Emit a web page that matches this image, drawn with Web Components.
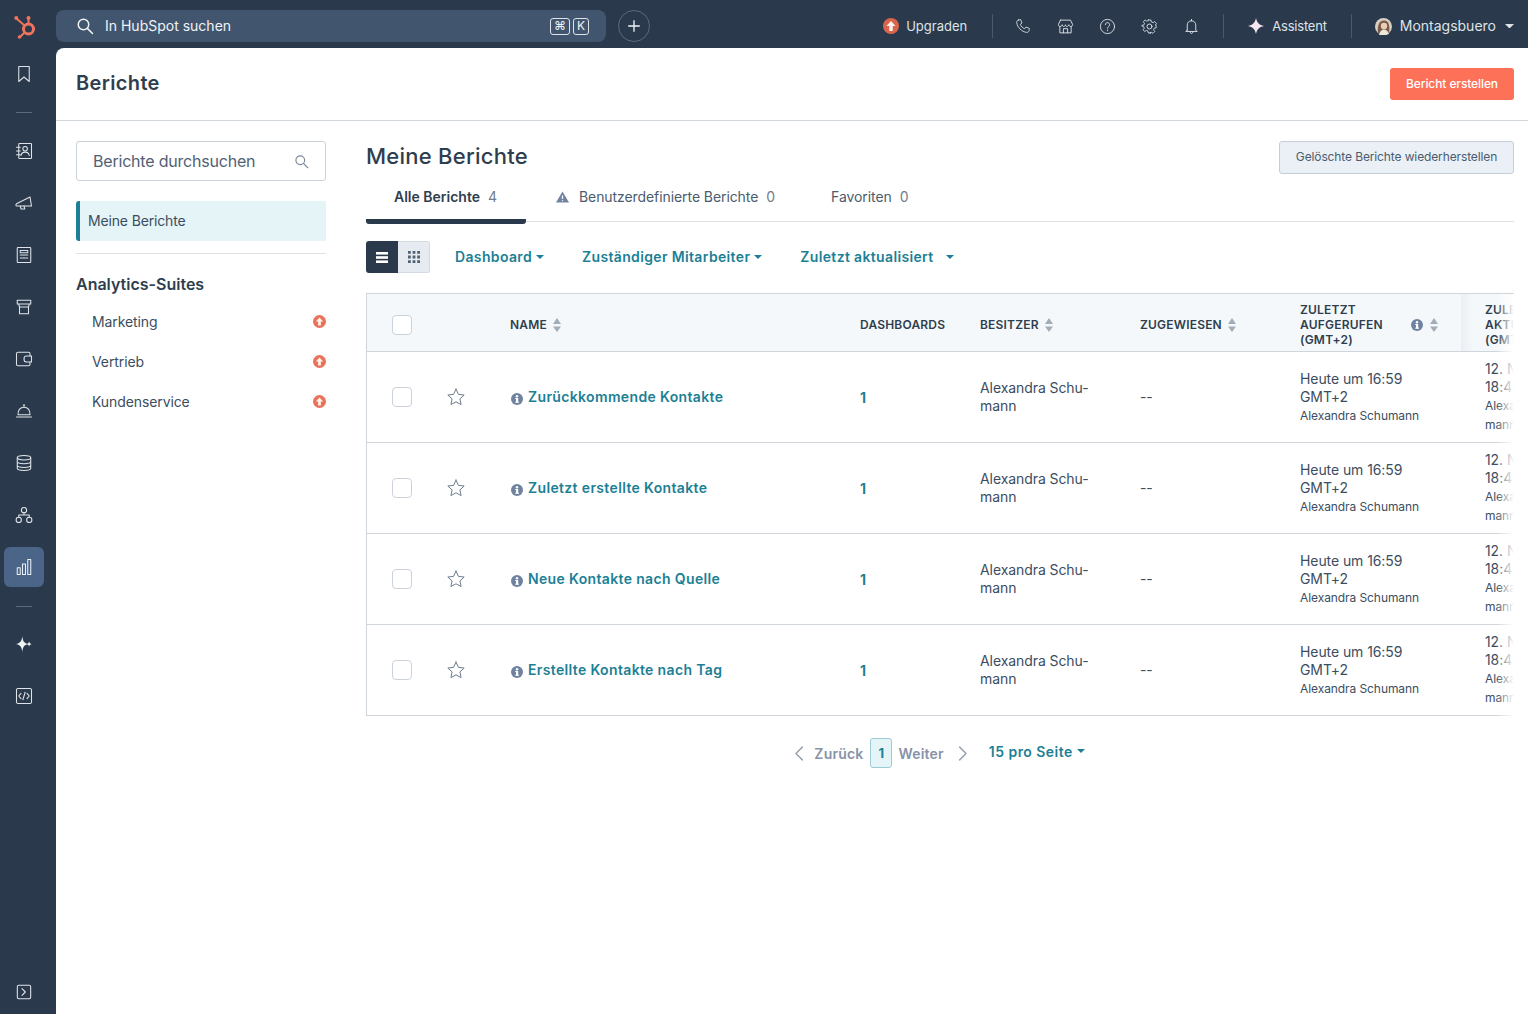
<!DOCTYPE html>
<html lang="de">
<head>
<meta charset="utf-8">
<title>Berichte</title>
<style>
  html, body { margin: 0; height: 100%; }
  body { font-family: Inter, "Liberation Sans", sans-serif; color: #33475b; background: #2a3a4c; overflow: hidden; }
</style>
</head>
<body>
<hs-app>
  <hs-topbar slot="top"></hs-topbar>
  <hs-rail slot="rail"></hs-rail>
  <hs-page-header slot="header" title="Berichte"></hs-page-header>
  <hs-sidebar slot="side"></hs-sidebar>
  <hs-reports slot="main">
    <hs-report-row>Zurückkommende Kontakte</hs-report-row>
    <hs-report-row>Zuletzt erstellte Kontakte</hs-report-row>
    <hs-report-row>Neue Kontakte nach Quelle</hs-report-row>
    <hs-report-row>Erstellte Kontakte nach Tag</hs-report-row>
  </hs-reports>
</hs-app>

<script>
// Icon paths, all on a 24x24 box
const ICONS = {
  search: '<circle cx="10" cy="10" r="7"/><path d="M15.500 15.500 22 22"/>',
  plus: '<path d="M12 4v16M4 12h16"/>',
  phone: '<path d="M5 3 8.500 2.500 10.500 7.500 8 9.500C9 12.500 11.500 15 14.500 16L16.500 13.500 21.500 15.500 21 19C20.500 21 19 22 17 21.500 10 20.500 3.500 14 2.500 7 2.500 5 3.500 3.500 5 3Z"/>',
  store: '<path d="M5 3h14l3 6c0 2-1 3-2.500 3S17 11 16.700 9.500C16.500 11 15 12 13.800 12S12 11 12 9.500C12 11 10.500 12 9.500 12S7.500 11 7.300 9.500C7 11 6 12 4.500 12S2 11 2 9L5 3Z"/><path d="M4 12v9h16v-9M9 21v-6h6v6"/>',
  help: '<circle cx="12" cy="12" r="10"/><path d="M9 9.500C9 7.500 10.500 6.500 12 6.500S15 7.700 15 9.500C15 12 12 12 12 14.500"/><path d="M12 17v1"/>',
  gear: '<circle cx="12" cy="12" r="3.500"/><path d="M10 2h4l.6 3 2.500 1.100 2.600-1.700 2.800 2.800-1.700 2.600L21.900 10l.1 4-3 .6-1 2.400 1.700 2.600-2.800 2.800-2.600-1.700-2.200 1L14 22h-4l-.6-3-2.500-1-2.600 1.700L2 17l1.700-2.600L2.700 12 0 11.300v-1l3-.6 1-2.500L2.300 4.600 5 2l2.600 1.700L9.500 3 10 2Z" transform="translate(1.200 1) scale(.92)"/>',
  bell: '<path d="M12 2v2M6 17V10c0-3.500 2.500-6 6-6s6 2.500 6 6v7l2 2H4l2-2ZM10 19c0 2 1 3 2 3s2-1 2-3"/>',
  bookmark: '<path d="M5 2h14v20l-7-6-7 6V2Z"/>',
  contacts: '<rect x="5" y="2" width="17" height="20" rx="1"/><circle cx="13.500" cy="9" r="3"/><path d="M8 18c.5-3.500 3-4.500 5.500-4.500S18.500 14.500 19 18M2 7h5M2 12h5M2 17h5"/>',
  megaphone: '<path d="M2 13 20 4l2 12-20 0-1-1 1-2Z"/><path d="M7 16l1 4h5l-1-4"/>',
  content: '<rect x="3" y="2" width="18" height="20" rx="1"/><path d="M7 12h10M7 16h10M7 9V6h10v3H7Z"/>',
  commerce: '<path d="M3 3h18v5H3zM5 8l1 4h12l1-4M6 12v9h12v-9M3 8h18"/>',
  wallet: '<path d="M20 8V5c0-1-1-2-2-2H4C3 3 2 4 2 5v14c0 1 1 2 2 2h14c1 0 2-1 2-2v-3"/><path d="M15 8h7v8h-7c-2 0-3-2-3-4s1-4 3-4Z"/>',
  service: '<path d="M4 17c0-6 3-10 8-10s8 4 8 10M2 20h20M11 4h2M12 4v3M4 17h16"/>',
  database: '<ellipse cx="12" cy="5" rx="9" ry="3"/><path d="M3 5v14c0 1.700 4 3 9 3s9-1.300 9-3V5M3 10c0 1.700 4 3 9 3s9-1.300 9-3M3 15c0 1.700 4 3 9 3s9-1.300 9-3"/>',
  nodes: '<circle cx="12" cy="5.500" r="3.500"/><circle cx="5" cy="18.500" r="3.500"/><circle cx="19" cy="18.500" r="3.500"/><path d="M12 9v3M5 15v-3h14v3"/>',
  bars: '<rect x="3" y="13" width="4" height="9"/><rect x="10" y="8" width="4" height="14"/><rect x="17" y="2" width="4" height="20"/>',
  code: '<rect x="2" y="2" width="20" height="20" rx="2"/><path d="M8 8.500 5 12l3 3.500M16 8.500l3 3.500-3 3.500M13.500 7l-3 10"/>',
  expand: '<rect x="2" y="2" width="20" height="20" rx="2"/><path d="M9 7l5 5-5 5"/>',
  star: '<path d="M12 2.500l2.900 6.300 6.900.8-5.100 4.700 1.400 6.800-6.100-3.400-6.100 3.400 1.400-6.800-5.100-4.700 6.900-.8L12 2.500Z"/>',
  chevleft: '<path d="M16 3 7 12l9 9"/>',
  chevright: '<path d="M8 3l9 9-9 9"/>'
};

class HsIcon extends HTMLElement {
  connectedCallback() {
    const size = this.getAttribute('size') || 16;
    const sw = this.getAttribute('stroke') || 1.6;
    this.attachShadow({ mode: 'open' }).innerHTML = `
      <style>:host { display: inline-flex; flex: none; } svg { display: block; }</style>
      <svg width="${size}" height="${size}" viewBox="0 0 24 24" fill="none" stroke="currentColor"
        stroke-width="${sw}" stroke-linejoin="round" stroke-linecap="round">${ICONS[this.getAttribute('name')] || ''}</svg>`;
  }
}
customElements.define('hs-icon', HsIcon);

// Small round coral badge with the up arrow
class HsUpgradeDot extends HTMLElement {
  connectedCallback() {
    const size = this.getAttribute('size') || 14;
    const fill = this.getAttribute('fill') || '#e8735a';
    this.attachShadow({ mode: 'open' }).innerHTML = `
      <style>:host { display: inline-flex; flex: none; } svg { display: block; }</style>
      <svg width="${size}" height="${size}" viewBox="0 0 16 16">
        <circle cx="8" cy="8" r="8" fill="${fill}"/>
        <path d="M8 3 12.500 8H9.700v5H6.300V8H3.500L8 3Z" fill="#fff2ec"/>
      </svg>`;
  }
}
customElements.define('hs-upgrade-dot', HsUpgradeDot);

class HsInfoDot extends HTMLElement {
  connectedCallback() {
    this.attachShadow({ mode: 'open' }).innerHTML = `
      <style>:host { display: inline-flex; flex: none; } svg { display: block; }</style>
      <svg width="12" height="12" viewBox="0 0 12 12">
        <circle cx="6" cy="6" r="6" fill="#6f83a0"/>
        <rect x="5" y="5" width="2.200" height="4.500" fill="#fff"/>
        <rect x="4.200" y="5" width="2" height="1" fill="#fff"/>
        <rect x="4.200" y="8.700" width="3.800" height="1" fill="#fff"/>
        <circle cx="6" cy="3.200" r="1.200" fill="#fff"/>
      </svg>`;
  }
}
customElements.define('hs-info-dot', HsInfoDot);

class HsSortArrows extends HTMLElement {
  connectedCallback() {
    this.attachShadow({ mode: 'open' }).innerHTML = `
      <style>:host { display: inline-flex; flex: none; } svg { display: block; }</style>
      <svg width="8" height="14" viewBox="0 0 8 14" fill="#a3adb8">
        <path d="M4 0 8 6H0ZM0 8.500h8L4 14Z"/>
      </svg>`;
  }
}
customElements.define('hs-sort-arrows', HsSortArrows);

class HsCaret extends HTMLElement {
  connectedCallback() {
    const size = this.getAttribute('size') || 8;
    this.attachShadow({ mode: 'open' }).innerHTML = `
      <style>:host { display: inline-flex; flex: none; } svg { display: block; }</style>
      <svg width="${size}" height="${size / 2}" viewBox="0 0 8 4" fill="currentColor"><path d="M0 0h8L4 4Z"/></svg>`;
  }
}
customElements.define('hs-caret', HsCaret);

class HsApp extends HTMLElement {
  constructor() {
    super();
    this.attachShadow({ mode: 'open' }).innerHTML = `
      <style>
        :host { display: grid; grid-template: 48px 1fr / 56px 1fr; height: 1014px; width: 1528px; background: #2a3a4c; }
        .top { grid-column: 1 / 3; }
        .main { background: #fff; border-top-left-radius: 8px; display: flex; flex-direction: column; min-width: 0; overflow: hidden; }
        .body { display: flex; flex: 1; }
      </style>
      <div class="top"><slot name="top"></slot></div>
      <slot name="rail"></slot>
      <div class="main">
        <slot name="header"></slot>
        <div class="body"><slot name="side"></slot><slot name="main"></slot></div>
      </div>`;
  }
}
customElements.define('hs-app', HsApp);

class HsTopbar extends HTMLElement {
  constructor() {
    super();
    this.attachShadow({ mode: 'open' }).innerHTML = `
      <style>
        :host { display: flex; align-items: center; height: 48px; box-sizing: border-box; padding-top: 4px; background: #2a3a4c; color: #dfe3e8; font-size: 13px; }
        .logo { width: 56px; display: flex; justify-content: center; flex: none; margin-left: -2px; margin-right: 2px; }
        .search { width: 550px; height: 32px; box-sizing: border-box; background: #41566e; border-radius: 8px; display: flex; align-items: center; padding: 0 17px 0 20px; color: #f0f3f6; font-size: 14px; }
        .search span.ph { margin-left: 11px; padding-bottom: 2px; flex: 1; }
        .kbd { display: inline-flex; align-items: center; justify-content: center; height: 17px; box-sizing: border-box; width: 16px; border: 1px solid #dfe3e8; border-radius: 3px; font-size: 12px; margin-left: 3px; line-height: 1; }
        .kbd.cmd { width: 20px; }
        .add { width: 32px; height: 32px; box-sizing: border-box; margin-left: 12px; border: 1px solid #5b6b7c; border-radius: 50%; display: flex; align-items: center; justify-content: center; color: #f0f3f6; }
        .right { margin-left: auto; display: flex; align-items: center; padding-right: 14px; }
        .sep { width: 1px; height: 24px; background: #4b5b6c; }
        .ic { width: 42px; display: flex; justify-content: center; }
        .upgrade { display: flex; align-items: center; gap: 7px; margin-right: 25px; }
        .assist { display: flex; align-items: center; gap: 8px; margin: 0 24px 0 24px; letter-spacing: -.2px; }
        .acct { display: flex; align-items: center; margin-left: 23px; font-size: 14px; }
        .acct span { margin: 0 9px 0 8px; padding-bottom: 1px; }
      </style>
      <div class="logo">
        <svg width="26" height="28" viewBox="0 0 26 28" fill="none" stroke="#f0745c" stroke-linecap="round">
          <circle cx="15.500" cy="17" r="5" stroke-width="3"/>
          <path d="M15.500 12V7M11.500 13.500 3.500 6.500M11.500 20.500 7 25" stroke-width="2"/>
          <circle cx="3.300" cy="6" r="2" fill="#f0745c" stroke="none"/>
          <circle cx="15.500" cy="6" r="2" fill="#f0745c" stroke="none"/>
          <circle cx="6.500" cy="25" r="1.800" fill="#f0745c" stroke="none"/>
        </svg>
      </div>
      <div class="search">
        <hs-icon name="search" size="18" stroke="2"></hs-icon>
        <span class="ph">In HubSpot suchen</span>
        <span class="kbd cmd">⌘</span><span class="kbd">K</span>
      </div>
      <div class="add"><hs-icon name="plus" size="16" stroke="2"></hs-icon></div>
      <div class="right">
        <div class="upgrade"><hs-upgrade-dot size="16" fill="#d9654c"></hs-upgrade-dot>Upgraden</div>
        <div class="sep"></div>
        <div style="width:9px"></div>
        <div class="ic"><hs-icon name="phone" size="16" stroke="1.300"></hs-icon></div>
        <div class="ic"><hs-icon name="store" size="17" stroke="1.300"></hs-icon></div>
        <div class="ic"><hs-icon name="help" size="17" stroke="1.300"></hs-icon></div>
        <div class="ic"><hs-icon name="gear" size="17" stroke="1.300"></hs-icon></div>
        <div class="ic"><hs-icon name="bell" size="17" stroke="1.300"></hs-icon></div>
        <div style="width:11px"></div>
        <div class="sep"></div>
        <div class="assist">
          <svg width="16" height="16" viewBox="0 0 16 16"><path d="M8 0C8.900 4.500 11 7 16 8 11 9 8.900 11.500 8 16 7.100 11.500 5 9 0 8 5 7 7.100 4.500 8 0Z" fill="#f6e6f0"/></svg>
          Assistent
        </div>
        <div class="sep"></div>
        <div class="acct">
          <svg width="17" height="17" viewBox="0 0 17 17">
            <circle cx="8.500" cy="8.500" r="8.500" fill="#d8cfc4"/>
            <path d="M3 15C2 8 4 2.500 9 2.500S15 8 14 15L10.500 17h-4Z" fill="#7b5a48"/>
            <circle cx="9" cy="8" r="3.200" fill="#e9cdb6"/>
            <path d="M4 17c1-4 3-5.500 5-5.500s4 1.500 5 4.500l-3 1Z" fill="#efe7dc"/>
          </svg>
          <span>Montagsbuero</span>
          <hs-caret size="9"></hs-caret>
        </div>
      </div>`;
  }
}
customElements.define('hs-topbar', HsTopbar);

class HsRail extends HTMLElement {
  constructor() {
    super();
    const item = (name, cls = '') => `<div class="it ${cls}"><hs-icon name="${name}" size="18" stroke="1.400"></hs-icon></div>`;
    this.attachShadow({ mode: 'open' }).innerHTML = `
      <style>
        :host { display: flex; flex-direction: column; align-items: center; padding: 6px 8px 0 0; box-sizing: border-box; color: #dfe3e8; background: #2a3a4c; height: 966px; }
        .it { width: 40px; height: 40px; flex: none; margin-bottom: 12px; border-radius: 6px; display: flex; align-items: center; justify-content: center; }
        .it.on { background: #4a6588; color: #e8eef5; margin-bottom: 0; }
        .rule { width: 16px; height: 1px; background: #5b6b7c; flex: none; }
        .r1 { margin: 6px 0 18px; }
        .r2 { margin: 19px 0 17px; }
        .end { margin-top: auto; margin-bottom: 2px; }
      </style>
      ${item('bookmark')}
      <div class="rule r1"></div>
      ${item('contacts')}${item('megaphone')}${item('content')}${item('commerce')}${item('wallet')}
      ${item('service')}${item('database')}${item('nodes')}${item('bars', 'on')}
      <div class="rule r2"></div>
      <div class="it"><svg width="18" height="18" viewBox="0 0 16 16" fill="#f0f3f6"><path d="M6.500 1C7 5 7.500 7 12 8 7.500 9 7 11 6.500 15 6 11 5 9 1 8 5 7 6 5 6.500 1ZM12.500 5.500C12.700 7 13.200 7.600 15 8 13.200 8.400 12.700 9 12.500 10.500 12.300 9 11.800 8.400 10.500 8 11.800 7.600 12.300 7 12.500 5.500Z"/></svg></div>
      ${item('code')}
      <div class="it end"><hs-icon name="expand" size="16" stroke="1.600"></hs-icon></div>`;
  }
}
customElements.define('hs-rail', HsRail);

class HsPageHeader extends HTMLElement {
  connectedCallback() {
    this.attachShadow({ mode: 'open' }).innerHTML = `
      <style>
        :host { display: flex; align-items: center; justify-content: space-between; height: 73px; box-sizing: border-box; padding: 0 14px 0 20px; border-bottom: 1px solid #cfd5db; }
        h1 { margin: 0 0 2px; font-size: 20px; font-weight: 600; color: #2f3e4e; letter-spacing: .35px; }
        button { height: 32px; width: 124px; border: 0; border-radius: 3px; background: #fd7158; color: #fff; font: 500 12px Inter, "Liberation Sans", sans-serif; padding: 0 0 2px; letter-spacing: -.1px; }
      </style>
      <h1>${this.getAttribute('title')}</h1>
      <button>Bericht erstellen</button>`;
  }
}
customElements.define('hs-page-header', HsPageHeader);

class HsSidebar extends HTMLElement {
  constructor() {
    super();
    const suite = n => `<div class="suite"><span>${n}</span><hs-upgrade-dot size="13"></hs-upgrade-dot></div>`;
    this.attachShadow({ mode: 'open' }).innerHTML = `
      <style>
        :host { display: block; width: 250px; margin-left: 20px; padding-top: 20px; flex: none; font-size: 14px; }
        .box { height: 40px; box-sizing: border-box; border: 1px solid #cbd2d9; border-radius: 3px; display: flex; align-items: center; justify-content: space-between; padding: 0 16px; font-size: 16px; color: #516174; letter-spacing: -.2px; }
        .box hs-icon { color: #7c8a99; }
        .active { margin-top: 20px; height: 40px; box-sizing: border-box; background: #e5f4f7; border-left: 4px solid #1d7f95; border-radius: 3px 0 0 3px; display: flex; align-items: center; padding: 0 0 2px 8px; color: #3c4d5f; letter-spacing: -.15px; }
        hr { border: 0; border-top: 1px solid #dfe3e8; margin: 12px 0 0; }
        h3 { margin: 20px 0 7px; font-size: 16px; line-height: 20px; font-weight: 600; color: #2f3e4e; }
        .suite { height: 40px; display: flex; align-items: center; justify-content: space-between; padding-left: 16px; color: #3c4d5f; letter-spacing: -.1px; }
        .suite hs-upgrade-dot { margin-top: 1px; }
      </style>
      <div class="box"><span>Berichte durchsuchen</span><hs-icon name="search" size="15" stroke="1.800"></hs-icon></div>
      <div class="active">Meine Berichte</div>
      <hr>
      <h3>Analytics-Suites</h3>
      ${suite('Marketing')}${suite('Vertrieb')}${suite('Kundenservice')}`;
  }
}
customElements.define('hs-sidebar', HsSidebar);

const COLS = '143px 350px 120px 160px 160px 161px 1fr';

class HsReportRow extends HTMLElement {
  constructor() {
    super();
    this.attachShadow({ mode: 'open' }).innerHTML = `
      <style>
        :host { display: grid; grid-template-columns: ${COLS}; height: 91px; box-sizing: border-box; border-bottom: 1px solid #cfd5db; align-items: center; font-size: 14px; line-height: 18px; color: #3c4d5f; letter-spacing: -.08px; }
        .sel { display: flex; align-items: center; padding-left: 25px; }
        .check { width: 20px; height: 20px; box-sizing: border-box; border: 1px solid #cbd2d9; border-radius: 4px; background: #fff; }
        .star { margin-left: 34px; color: #6f7d8c; }
        .name { display: flex; align-items: center; gap: 5px; font-weight: 600; color: #1d7f95; letter-spacing: .35px; }
        .name hs-info-dot { margin: 3px 0 0 1px; }
        .dash { font-weight: 700; color: #1d7f95; padding-top: 1px; }
        .small { font-size: 12px; }
        .last { padding-left: 24px; white-space: nowrap; overflow: hidden; }
      </style>
      <div class="sel"><div class="check"></div><hs-icon class="star" name="star" size="20" stroke="1.200"></hs-icon></div>
      <div class="name"><hs-info-dot></hs-info-dot><span><slot></slot></span></div>
      <div class="dash">1</div>
      <div>Alexandra Schu-<br>mann</div>
      <div>--</div>
      <div>Heute um 16:59<br>GMT+2<br><span class="small">Alexandra Schumann</span></div>
      <div class="last">12. Nov.<br>18:42<br><span class="small">Alexandra Schu-<br>mann</span></div>`;
  }
}
customElements.define('hs-report-row', HsReportRow);

class HsReports extends HTMLElement {
  constructor() {
    super();
    this.attachShadow({ mode: 'open' }).innerHTML = `
      <style>
        :host { display: block; width: 1148px; margin-left: 40px; padding-top: 19px; color: #33475b; font-size: 14px; }
        .head { display: flex; align-items: center; justify-content: space-between; height: 34px; }
        h2 { margin: 0 0 2px; font-size: 22px; font-weight: 500; color: #2f3e4e; letter-spacing: .25px; }
        .restore { width: 235px; height: 33px; box-sizing: border-box; border: 1px solid #c5ced8; border-radius: 3px; background: #eaf0f6; color: #4b5c6e; font: 400 12px Inter, "Liberation Sans", sans-serif; padding: 0 0 2px; letter-spacing: -.12px; }
        .tabs { display: flex; height: 48px; border-bottom: 1px solid #dfe3e8; box-sizing: border-box; }
        .tab { display: flex; align-items: center; padding-bottom: 2px; height: 47px; color: #4b5c6e; box-sizing: border-box; letter-spacing: -.08px; }
        .tab.on { width: 160px; padding-left: 28px; height: 50px; padding-bottom: 1px; border-bottom: 5px solid #2a3a4c; border-radius: 0 0 3px 3px; font-weight: 600; color: #2f3e4e; letter-spacing: 0; }
        .tab b { font-weight: 400; margin-left: 8px; color: #6f7d8c; }
        .tab svg { margin: 0 10px 0 30px; }
        .tab.fav { margin-left: 56px; }
        .bar { display: flex; align-items: center; height: 32px; margin-top: 19px; color: #1d7f95; font-weight: 600; letter-spacing: .35px; }
        .toggle { display: flex; width: 64px; height: 32px; border-radius: 3px; overflow: hidden; margin-right: 25px; }
        .toggle div { width: 32px; display: flex; align-items: center; justify-content: center; }
        .toggle .a { background: #2a3a4c; }
        .toggle .b { background: #e6ebf1; border: 1px solid #d4dbe2; border-left: 0; box-sizing: border-box; }
        .filter { display: flex; align-items: center; gap: 4px; margin-right: 38px; padding-bottom: 2px; }
        .filter hs-caret { margin-top: 1px; }
        .table { position: relative; margin-top: 20px; overflow: hidden; border-top: 1px solid #cfd5db; border-left: 1px solid #cfd5db; }
        .thead { display: grid; grid-template-columns: ${COLS}; height: 58px; box-sizing: border-box; padding-top: 4px; background: #f5f8fa; border-bottom: 1px solid #cfd5db; align-items: center; font-size: 12px; line-height: 15px; font-weight: 600; color: #2f3e4e; letter-spacing: .2px; }
        .th { display: flex; align-items: center; gap: 6px; }
        .chk { width: 20px; height: 20px; margin-left: 25px; box-sizing: border-box; border: 1px solid #cbd2d9; border-radius: 4px; background: #fff; }
        .th.wide { justify-content: space-between; padding-right: 23px; }
        .th .mini { display: flex; align-items: center; gap: 7px; }
        .th.last { background: linear-gradient(90deg, #e9eff4, #f5f8fa 12px); align-self: stretch; margin-top: -4px; padding-top: 4px; padding-left: 24px; white-space: nowrap; }
        .fade { position: absolute; top: 0; right: 0; bottom: 0; width: 18px; background: linear-gradient(90deg, rgba(255,255,255,0), #fff 100%); }
        .pager { display: flex; align-items: center; justify-content: center; margin-top: 22px; font-weight: 600; color: #8793a8; position: relative; left: -2px; letter-spacing: .2px; }
        .pg { width: 22px; height: 30px; box-sizing: border-box; border: 1px solid #9ccbd6; background: #e5f4f7; color: #1d7f95; border-radius: 3px; display: flex; align-items: center; justify-content: center; font-size: 13px; font-weight: 700; margin: 0 6px 0 7px; }
        .pager hs-icon { color: #97a1ae; }
        .per { display: flex; align-items: center; gap: 4px; margin: -4px 0 0 18px; color: #1d7f95; letter-spacing: .45px; }
      </style>
      <div class="head"><h2>Meine Berichte</h2><button class="restore">Gelöschte Berichte wiederherstellen</button></div>
      <div class="tabs">
        <div class="tab on">Alle Berichte<b>4</b></div>
        <div class="tab"><svg width="13" height="12" viewBox="0 0 13 12"><path d="M6.500.5 13 11.500H0Z" fill="#6f83a0"/><path d="M6.500 4.500v3.500M6.500 9.200v1" stroke="#fff" stroke-width="1.300"/></svg>Benutzerdefinierte Berichte<b>0</b></div>
        <div class="tab fav">Favoriten<b>0</b></div>
      </div>
      <div class="bar">
        <div class="toggle">
          <div class="a"><svg width="12" height="11" viewBox="0 0 12 11" fill="#fff"><rect width="12" height="2.600"/><rect y="4.200" width="12" height="2.600"/><rect y="8.400" width="12" height="2.600"/></svg></div>
          <div class="b"><svg width="12" height="12" viewBox="0 0 12 12" fill="#516174"><path d="M0 0h2.800v2.800H0zM4.600 0h2.800v2.800H4.600zM9.200 0H12v2.800H9.200zM0 4.600h2.800v2.800H0zM4.600 4.600h2.800v2.800H4.600zM9.200 4.600H12v2.800H9.200zM0 9.200h2.800V12H0zM4.600 9.200h2.800V12H4.600zM9.200 9.200H12V12H9.200z"/></svg></div>
        </div>
        <div class="filter">Dashboard<hs-caret></hs-caret></div>
        <div class="filter">Zuständiger Mitarbeiter<hs-caret></hs-caret></div>
        <div class="filter" style="gap:12px">Zuletzt aktualisiert<hs-caret></hs-caret></div>
      </div>
      <div class="table">
        <div class="thead">
          <div><div class="chk"></div></div>
          <div class="th">NAME<hs-sort-arrows></hs-sort-arrows></div>
          <div class="th">DASHBOARDS</div>
          <div class="th">BESITZER<hs-sort-arrows></hs-sort-arrows></div>
          <div class="th">ZUGEWIESEN<hs-sort-arrows></hs-sort-arrows></div>
          <div class="th wide"><span>ZULETZT<br>AUFGERUFEN<br>(GMT+2)</span><span class="mini"><hs-info-dot></hs-info-dot><hs-sort-arrows></hs-sort-arrows></span></div>
          <div class="th last"><span>ZULETZT<br>AKTUALISIERT<br>(GMT+2)</span></div>
        </div>
        <slot></slot>
        <div class="fade"></div>
      </div>
      <div class="pager">
        <hs-icon name="chevleft" size="17" stroke="2"></hs-icon>
        <span style="margin-left:6px">Zurück</span>
        <div class="pg">1</div>
        <span>Weiter</span>
        <hs-icon name="chevright" size="17" stroke="2" style="margin-left:10px"></hs-icon>
        <div class="per">15 pro Seite<hs-caret></hs-caret></div>
      </div>`;
  }
}
customElements.define('hs-reports', HsReports);
</script>
</body>
</html>
